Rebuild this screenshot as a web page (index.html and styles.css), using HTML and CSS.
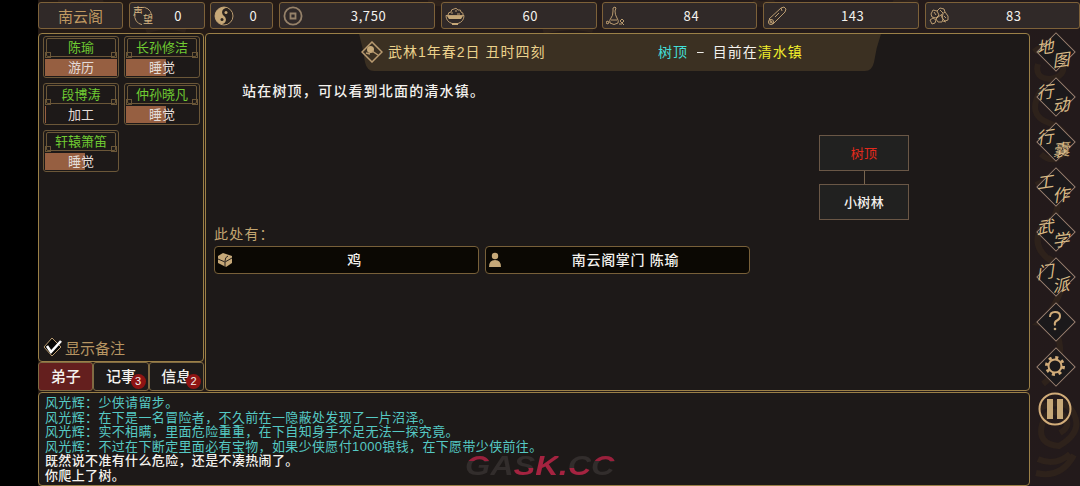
FILE: index.html
```html
<!DOCTYPE html>
<html lang="zh-cn">
<head>
<meta charset="UTF-8">
<meta name="viewport" content="width=device-width, initial-scale=1.0">
<title>南云阁</title>
<link rel="stylesheet" href="styles.css">
</head>
<body>
<div class="game">
  <svg class="pattern" viewBox="0 0 1042 486">
    <path d="M996 52q16-14 26 5t-10 22q-16-1-12-15M1003 90q-15 25 8 33t17 28q-12 15-25 3M998 185q18-10 21 12t-14 27q-14 22 8 37M1010 258q22 12 12 35t-20 30q18 2 20 24t-17 37M1002 408q25-12 34 6t-15 32q-22-2-17-21t21-10q10 10-3 18M998 473q25 6 38-18M1000 459q17 8 32-5"/>
    <path d="M20 1q25 6 45-1M108 31q20-8 40-1M390 1q20 6 32-1M505 31q30-7 50-1M715 1q9 7 21-1M855 1q10 5 25-1"/>
  </svg>

  <header class="resources">
    <div class="res sect">南云阁</div>
    <div class="res">
      <svg viewBox="0 0 20 20"><path d="M8 1.500A8.600 8.600 0 0 1 18.500 9M9 18.600A8.600 8.600 0 0 1 2 8"/><text x="0" y="9">声</text><text x="10" y="17">望</text></svg>
      <span>0</span>
    </div>
    <div class="res">
      <svg viewBox="0 0 20 20"><circle cx="10" cy="10" r="9" fill="#29221e"/><path class="solid" d="M10 1a9 9 0 0 0 0 18a4.5 4.5 0 0 0 0-9a4.5 4.5 0 0 1 0-9z" transform="rotate(35 10 10)"/><circle class="dark" cx="8" cy="13.500" r="1.5"/><circle class="solid" cx="12" cy="6.500" r="1.5"/></svg>
      <span>0</span>
    </div>
    <div class="res">
      <svg class="coin" viewBox="0 0 20 20"><circle cx="10" cy="10" r="8.6"/><path d="M7.5 7.5h5v5h-5z"/></svg>
      <span>3,750</span>
    </div>
    <div class="res">
      <svg viewBox="0 0 20 20"><path d="M3 9q0-3 3-3q0-3 3-3q2-2 4 1q3-1 3 2q3 1 2 3M6 7h2M10 5h2M12 8h3"/><path d="M1 9.500h18q0 6-6 8H7q-6-2-6-8z"/><path class="solid" d="M2 10h16l-2 3H4zM7 17h6v2H7z"/></svg>
      <span>60</span>
    </div>
    <div class="res">
      <svg viewBox="0 0 20 20"><path d="M7 2l2-1 1 1-1 3q0 4 2 7t1 5q-4 3-8 0q-1-3 1-5t2-7zM5 14h6M1 15l2 1-1 2-2-1zM14 15l2-2 2 2-2 2zM16 17l2 2M13 18h3"/></svg>
      <span>84</span>
    </div>
    <div class="res">
      <svg viewBox="0 0 20 20"><path d="M2 13L14 2l3-1 2 2-1 3L6 18zM14 2l1 3M8 11l4-4"/><circle cx="4" cy="16" r="2.6"/><circle cx="4" cy="16" r="1"/></svg>
      <span>143</span>
    </div>
    <div class="res">
      <svg viewBox="0 0 20 20"><path d="M2 8l2-4 4 1 2 4-3 3-4-1zM8 5l3-3 4 1 1 3-4 3M16 6l3 4v4l-3 1-3-3 1-4M9 11l3-2 2 4-1 3H9l-2-3zM1 14l3-2 3 2-1 3-3 1zM14 15l3 1M5 6l2 3M11 4l3 3M15 10l2 2"/></svg>
      <span>83</span>
    </div>
  </header>

  <div class="body">
    <div class="left">
      <div class="top">
        <aside class="side">
          <section class="panel members">
            <div class="cards">
              <div class="card"><div class="name">陈瑜</div><div class="job"><i style="width:100%"></i><span>游历</span></div></div>
              <div class="card"><div class="name">长孙修洁</div><div class="job"><i style="width:56%"></i><span>睡觉</span></div></div>
              <div class="card"><div class="name">段博涛</div><div class="job"><i style="width:2%"></i><span>加工</span></div></div>
              <div class="card"><div class="name">仲孙晓凡</div><div class="job"><i style="width:56%"></i><span>睡觉</span></div></div>
              <div class="card"><div class="name">轩辕箫笛</div><div class="job"><i style="width:56%"></i><span>睡觉</span></div></div>
            </div>
            <label class="notes">
              <svg viewBox="0 0 20 20"><path class="box" d="M9 1l9 9-9 9-8-9z"/><path class="tick" d="M4 9l4 6L18 4"/></svg>
              显示备注
            </label>
          </section>
          <nav class="tabs">
            <div class="tab active">弟子</div>
            <div class="tab">记事<b>3</b></div>
            <div class="tab">信息<b>2</b></div>
          </nav>
        </aside>

        <main class="panel scene">
          <div class="banner">
            <svg class="plate" viewBox="0 0 522 39" preserveAspectRatio="none"><path d="M0 0h522q-5 14-7 29-2 9-9 9H15q-7 0-9-9Q4 14 0 0z"/></svg>
            <svg class="scroll" viewBox="0 0 22 22"><path d="M11 1l10 10-10 10L1 11z"/><circle class="solid" cx="9.500" cy="8.500" r="3.500"/><path d="M11 10l6 4M5 12l4 1"/></svg>
            <span class="time">武林1年春2日 丑时四刻</span>
            <span class="place"><em>树顶</em> <i>－</i> 目前在<strong>清水镇</strong></span>
          </div>
          <p class="desc">站在树顶，可以看到北面的清水镇。</p>
          <div class="map">
            <div class="node here">树顶</div>
            <div class="link"></div>
            <div class="node">小树林</div>
          </div>
          <div class="around">此处有：</div>
          <div class="things">
            <div class="thing">
              <svg viewBox="0 0 16 16"><path class="solid" d="M1 4l5-3 9 3v7l-6 4-8-4z"/><path class="cut" d="M1 7l7 3 7-4M8 10v5M8 9q0-4 3-5"/></svg>
              <span>鸡</span>
            </div>
            <div class="thing">
              <svg viewBox="0 0 16 16"><circle class="solid" cx="7" cy="4" r="3.200"/><path class="solid" d="M1 15q0-7 6-7t6 7z"/></svg>
              <span>南云阁掌门 陈瑜</span>
            </div>
          </div>
        </main>
      </div>

      <section class="panel log">
        <p class="talk">风光辉：少侠请留步。</p>
        <p class="talk">风光辉：在下是一名冒险者，不久前在一隐蔽处发现了一片沼泽。</p>
        <p class="talk">风光辉：实不相瞒，里面危险重重，在下自知身手不足无法一探究竟。</p>
        <p class="talk">风光辉：不过在下断定里面必有宝物，如果少侠愿付1000银钱，在下愿带少侠前往。</p>
        <p>既然说不准有什么危险，还是不凑热闹了。</p>
        <p>你爬上了树。</p>
        <div class="watermark"><span class="g">G</span><span>A</span><span class="s">S</span><span class="k">K</span><span class="k">.</span><span class="s">C</span><span class="g">C</span></div>
      </section>
    </div>

    <nav class="menu">
      <div class="item"><span>地</span><span>图</span></div>
      <div class="item"><span>行</span><span>动</span></div>
      <div class="item"><span>行</span><span>囊</span></div>
      <div class="item"><span>工</span><span>作</span></div>
      <div class="item"><span>武</span><span>学</span></div>
      <div class="item"><span>门</span><span>派</span></div>
      <div class="item"><svg viewBox="0 0 38 38"><path d="M14 15q0-5 5-5t5 4q0 3-3 4.500t-2 5"/><circle class="solid" cx="19" cy="27" r="1.300"/></svg></div>
      <div class="item"><svg viewBox="0 0 38 38"><circle cx="19" cy="19" r="6.500"/><circle class="teeth" cx="19" cy="19" r="8.500"/></svg></div>
      <div class="pause"><svg viewBox="0 0 34 34"><circle cx="17" cy="17" r="15.500"/><path class="solid" d="M9 7h6v20H9zM19 7h6v20h-6z"/></svg></div>
    </nav>
  </div>
</div>
</body>
</html>
```

FILE: styles.css
```css
* {
  box-sizing: border-box;
}

body {
  margin: 0;
  background: #000;
  color: #f4f2ee;
  font-family: "Liberation Sans", "Noto Sans CJK SC", sans-serif;
  font-size: 13px;
  overflow: hidden;
}

p {
  margin: 0;
}

svg {
  fill: none;
  stroke: #b99b70;
  stroke-width: 1;
}

.solid {
  fill: #c6a878;
  stroke: none;
}

.dark {
  fill: #29221e;
  stroke: none;
}

.cut {
  stroke: #29221e;
}

.game {
  position: relative;
  margin-left: 38px;
  width: 1042px;
  height: 486px;
  background: linear-gradient(90deg, #241a15, #231a1b);
}

.pattern {
  position: absolute;
  left: 0;
  top: 0;
  width: 1042px;
  height: 486px;
  stroke: #2e221b;
  stroke-width: 6;
}

/* top bar */
.resources {
  position: relative;
  display: grid;
  grid-template-columns: 85px 76px 63px 156px 156px 155px 156px 155px;
  column-gap: 5.7px;
  height: 33px;
  padding-top: 2px;
}

.res {
  display: flex;
  align-items: center;
  height: 27px;
  padding-left: 3px;
  border: 1px solid #7d6139;
  border-radius: 3px;
  background: #302928;
}

.res svg {
  flex: none;
  width: 20px;
  height: 20px;
}

.res svg text {
  fill: #d9b985;
  stroke: none;
  font-size: 10px;
}

.res .coin {
  stroke: #96826a;
  stroke-width: 1.8;
}

.res span {
  flex: 1;
  text-align: center;
  font-family: "Noto Sans CJK SC", sans-serif;
  font-size: 13px;
  letter-spacing: 0.6px;
}

.sect {
  justify-content: center;
  padding: 0;
  color: #c09a62;
  font-size: 15px;
}

/* panels */
.body {
  position: relative;
  display: flex;
}

.left {
  width: 992px;
}

.top {
  display: flex;
  gap: 1px;
  height: 358px;
}

.panel {
  border: 1px solid #9b8047;
  border-radius: 4px;
  background: #1d1918;
}

.side {
  width: 166px;
}

.members {
  display: flex;
  flex-direction: column;
  justify-content: space-between;
  height: 329px;
  padding: 2px 4px 4px;
}

.cards {
  display: grid;
  grid-template-columns: 76px 76px;
  gap: 5px;
}

.card {
  height: 42px;
  padding: 1px;
  border: 1px solid #6b5738;
  border-radius: 3px;
}

.name {
  position: relative;
  height: 19px;
  margin: 0 1px 1px;
  border: 1px solid #6b5738;
  border-radius: 2px;
  color: #70cb32;
  font-size: 13px;
  line-height: 18px;
  text-align: center;
}

.name::before,
.name::after {
  content: "";
  position: absolute;
  bottom: -2px;
  left: -2px;
  width: 4px;
  height: 4px;
  border: 1px solid #6b5738;
}

.name::after {
  right: -2px;
  left: auto;
}

.job {
  position: relative;
  height: 17px;
  margin-top: 2px;
  color: #e4dcd8;
  line-height: 17px;
  text-align: center;
}

.job i {
  position: absolute;
  left: 0;
  top: 0;
  height: 100%;
  background: #965f41;
}

.job span {
  position: relative;
}

.notes {
  display: flex;
  align-items: center;
  gap: 2px;
  height: 20px;
  color: #b69562;
  font-size: 15px;
}

.notes svg {
  width: 20px;
  height: 20px;
}

.notes .box {
  fill: #080706;
}

.notes .tick {
  stroke: #fff;
  stroke-width: 2.6;
}

.tabs {
  display: flex;
  height: 29px;
}

.tab {
  position: relative;
  flex: 1;
  height: 29px;
  border: 1px solid #806b43;
  border-radius: 3px;
  background: #1e1b1a;
  font-size: 15px;
  font-weight: 500;
  line-height: 28px;
  text-align: center;
}

.tab.active {
  background: #641f1e;
}

.tab b {
  position: absolute;
  right: 2px;
  bottom: 1px;
  width: 15px;
  height: 15px;
  border-radius: 50%;
  background: #8e1413;
  font-size: 11px;
  font-weight: 400;
  line-height: 15px;
}

/* scene */
.scene {
  display: flex;
  flex-direction: column;
  width: 825px;
  padding-left: 8px;
}

.banner {
  position: relative;
  display: flex;
  align-items: center;
  width: 522px;
  height: 38px;
  margin-left: 145px;
  font-size: 14px;
  letter-spacing: 1px;
}

.plate {
  position: absolute;
  inset: 0;
  width: 522px;
  height: 38px;
  fill: #3b3022;
  stroke: none;
}

.scroll {
  position: relative;
  width: 22px;
  height: 22px;
  margin: -3px 0 0 2px;
  stroke-width: 1.5;
}

.time {
  position: relative;
  width: 270px;
  margin: -4px 0 0 5px;
  color: #ecd28c;
}

.place {
  position: relative;
  margin-top: -4px;
  white-space: nowrap;
}

.place em {
  color: #43dfd8;
  font-style: normal;
}

.place i {
  display: inline-block;
  font-style: normal;
  transform: scaleX(0.65);
}

.place strong {
  color: #f0ec2b;
  font-weight: 400;
}

.desc {
  height: 63px;
  margin-left: 28px;
  padding-top: 9px;
  font-size: 14px;
  font-weight: 500;
  letter-spacing: 1.2px;
  line-height: 20px;
}

.map {
  display: flex;
  flex-direction: column;
  align-items: center;
  width: 90px;
  height: 85px;
  margin-left: 605px;
}

.node {
  width: 90px;
  height: 36px;
  border: 1px solid #6a5746;
  background: #212120;
  font-size: 13px;
  font-weight: 500;
  letter-spacing: 0.3px;
  line-height: 35px;
  text-align: center;
}

.node.here {
  color: #e52a1c;
  font-weight: 400;
}

.link {
  width: 1px;
  height: 14px;
  background: #79664f;
}

.around {
  height: 26px;
  color: #c3a571;
  font-size: 14px;
  letter-spacing: 1.2px;
  line-height: 28px;
}

.things {
  display: flex;
  gap: 6px;
}

.thing {
  display: flex;
  align-items: center;
  width: 265px;
  height: 28px;
  padding: 0 2px;
  border: 1px solid #786039;
  border-radius: 4px;
  background: #0b0803;
  font-weight: 500;
}

.thing svg {
  width: 16px;
  height: 16px;
}

.thing span {
  flex: 1;
  margin-top: -3px;
  font-size: 14px;
  letter-spacing: 0.7px;
  text-align: center;
}

/* message log */
.log {
  position: relative;
  height: 94px;
  margin-top: 1px;
  padding: 3px 6px;
  font-size: 13px;
  font-weight: 500;
  letter-spacing: 0.35px;
  line-height: 14.5px;
  white-space: nowrap;
}

.talk {
  color: #55c9c4;
  font-weight: 400;
}

.watermark {
  position: absolute;
  left: 426px;
  top: 62px;
  display: flex;
  font-family: "Liberation Sans", sans-serif;
  font-size: 27px;
  font-style: italic;
  font-weight: 700;
  letter-spacing: 0;
  line-height: 22px;
  transform: scaleX(1.2);
  transform-origin: left;
}

.watermark span {
  color: transparent;
  background: #322d2c;
  background-clip: text;
}

.watermark .g {
  background-image: linear-gradient(#9a203c 6px, #322d2c 6px);
}

.watermark .s {
  background-image: linear-gradient(#322d2c 13px, #a52340 13px);
}

.watermark .k {
  background-color: #a52340;
}

/* right menu */
.menu {
  display: flex;
  flex-direction: column;
  gap: 7px;
  padding-left: 6px;
}

.item {
  position: relative;
  width: 38px;
  height: 38px;
}

.item::before {
  content: "";
  position: absolute;
  left: 6px;
  top: 5px;
  width: 26px;
  height: 26px;
  border: 1.5px solid #9c8170;
  background: #1b191b;
  transform: rotate(45deg);
}

.item span {
  position: absolute;
  left: 2px;
  top: 4px;
  color: #d8b985;
  font-family: "Noto Sans CJK SC", sans-serif;
  font-size: 17px;
  line-height: 18px;
  transform: skew(-8deg, -8deg);
}

.item span + span {
  left: 18px;
  top: 17px;
}

.item svg,
.pause svg {
  position: relative;
  top: -1px;
  display: block;
  stroke: #d1ac79;
  stroke-width: 2;
}

.item .teeth {
  stroke-width: 3;
  stroke-dasharray: 3 3.676;
}

.pause svg {
  width: 34px;
  height: 34px;
  margin-left: 2px;
}
```
